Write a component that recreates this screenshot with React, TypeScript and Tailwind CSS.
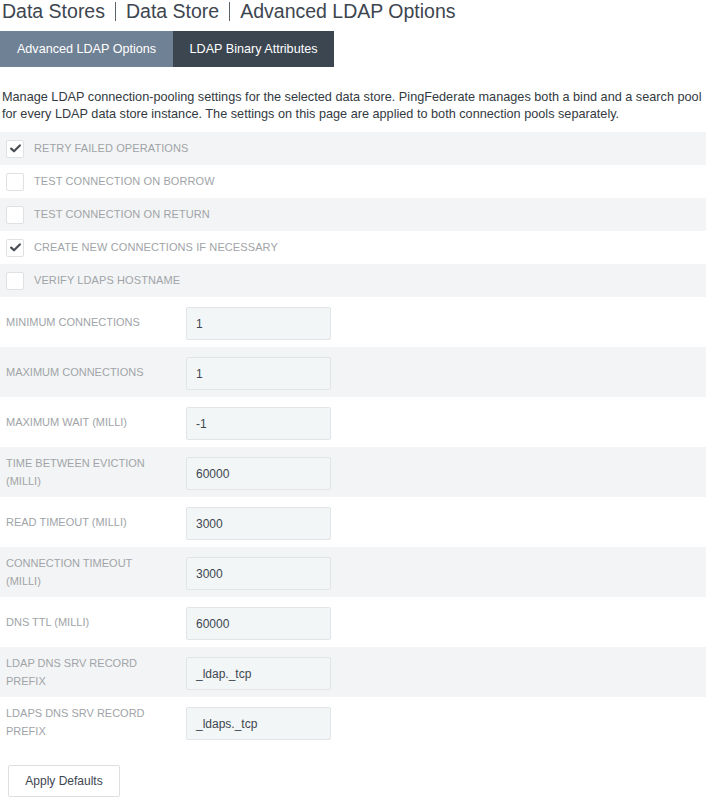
import React from "react";

const checks = [
  { label: "Retry failed operations", checked: true },
  { label: "Test connection on borrow", checked: false },
  { label: "Test connection on return", checked: false },
  { label: "Create new connections if necessary", checked: true },
  { label: "Verify LDAPS hostname", checked: false },
];

const fields = [
  { label: ["Minimum connections"], value: "1" },
  { label: ["Maximum connections"], value: "1" },
  { label: ["Maximum wait (milli)"], value: "-1" },
  { label: ["Time between eviction", "(milli)"], value: "60000" },
  { label: ["Read timeout (milli)"], value: "3000" },
  { label: ["Connection timeout", "(milli)"], value: "3000" },
  { label: ["DNS TTL (milli)"], value: "60000" },
  { label: ["LDAP DNS SRV record", "prefix"], value: "_ldap._tcp" },
  { label: ["LDAPS DNS SRV record", "prefix"], value: "_ldaps._tcp" },
];

function Check({ checked }: { checked: boolean }) {
  return (
    <span className="w-[18px] h-[18px] flex-shrink-0 rounded-[2px] border border-[#dfe2e5] bg-white flex items-center justify-center">
      {checked && (
        <svg width="11" height="9" viewBox="0 0 11 9">
          <path d="M1.2 4.6 L4 7.3 L9.8 1.4" fill="none" stroke="#4a4f55" strokeWidth="2.2" strokeLinecap="round" strokeLinejoin="round" />
        </svg>
      )}
    </span>
  );
}

export default function App() {
  return (
    <div className="w-[706px] bg-white text-[#3c4650]" style={{ fontFamily: '"Liberation Sans", Arial, sans-serif' }}>
      <h1 className="flex items-center h-[22px] pl-[2px] text-[19.5px] leading-[22px] text-[#3d4650]">
        <span>Data Stores</span>
        <span className="mx-[10px] w-px h-[19px] bg-[#5b636b]" />
        <span>Data Store</span>
        <span className="mx-[10px] w-px h-[19px] bg-[#5b636b]" />
        <span>Advanced LDAP Options</span>
      </h1>

      <div className="flex mt-[9px] h-[36px] text-[12.6px] text-white">
        <div className="w-[173px] bg-[#6f8194] flex items-center justify-center">Advanced LDAP Options</div>
        <div className="w-[161px] bg-[#3b4651] flex items-center justify-center">LDAP Binary Attributes</div>
      </div>

      <p className="mt-[22px] pl-[2px] text-[12.7px] leading-[17px] text-[#333a41]">
        Manage LDAP connection-pooling settings for the selected data store. PingFederate manages both a bind and a search pool
        for every LDAP data store instance. The settings on this page are applied to both connection pools separately.
      </p>

      <div className="mt-[9px]">
        {checks.map((c, i) => (
          <div
            key={c.label}
            className={`flex items-center gap-[10px] h-[33px] pl-[6px] ${i % 2 === 0 ? "bg-[#f3f4f5]" : "bg-white"}`}
          >
            <Check checked={c.checked} />
            <span className="uppercase text-[11px] text-[#a0a4a8] tracking-[0.1px]">{c.label}</span>
          </div>
        ))}
      </div>

      <div>
        {fields.map((f, i) => (
          <div
            key={f.label.join(" ")}
            className={`flex items-center h-[50px] pl-[6px] ${i % 2 === 1 ? "bg-[#f3f4f5]" : "bg-white"}`}
          >
            <div className="w-[180px] uppercase text-[11px] leading-[18px] text-[#a0a4a8]">
              {f.label.map((l) => (
                <div key={l}>{l}</div>
              ))}
            </div>
            <div className="self-start mt-[10px] w-[145px] h-[33px] rounded-[2px] border border-[#e1e5e8] bg-[#f3f6f7] flex items-center pl-[9px] text-[12px] text-[#3d4650]">
              {f.value}
            </div>
          </div>
        ))}
      </div>

      <div className="pt-[18px] pb-[4px] pl-[8px]">
        <button className="w-[112px] h-[32px] rounded-[2px] border border-[#dcdfe2] bg-white text-[12px] text-[#3d4650]">
          Apply Defaults
        </button>
      </div>
    </div>
  );
}
